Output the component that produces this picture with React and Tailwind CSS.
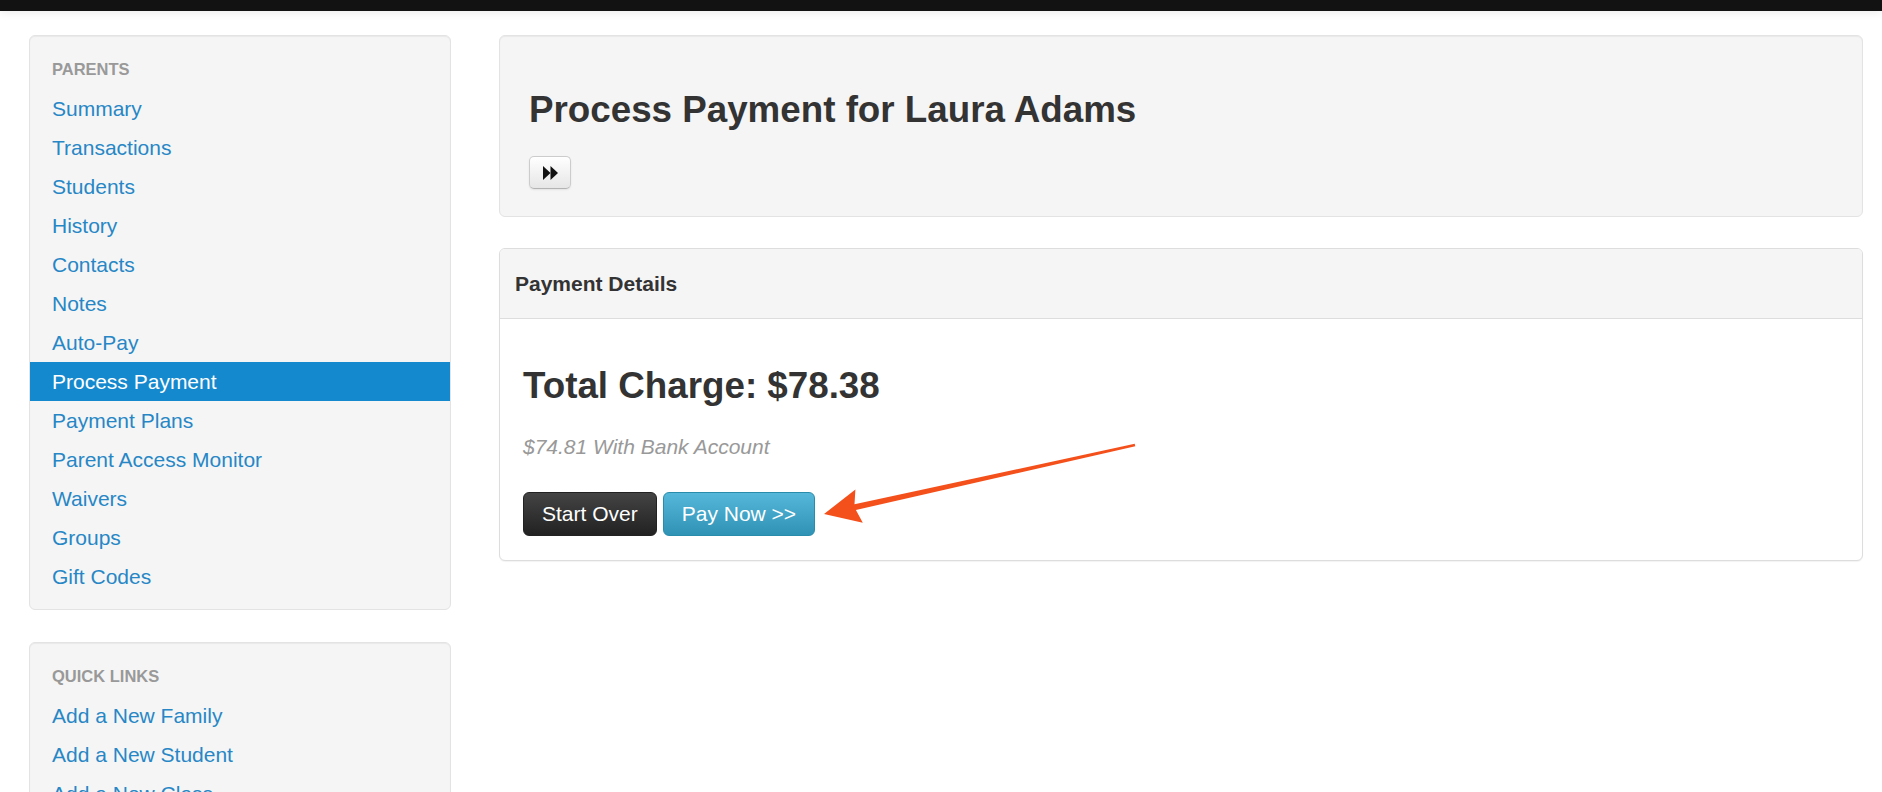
import React from "react";

const parentLinks = [
  "Summary",
  "Transactions",
  "Students",
  "History",
  "Contacts",
  "Notes",
  "Auto-Pay",
  "Process Payment",
  "Payment Plans",
  "Parent Access Monitor",
  "Waivers",
  "Groups",
  "Gift Codes",
];

const quickLinks = ["Add a New Family", "Add a New Student", "Add a New Class"];

function NavCard({ title, items, active }) {
  return (
    <div className="rounded-[6px] border border-[#e3e3e3] bg-[#f5f5f5] pt-[14px] pb-[13px] shadow-[inset_0_1px_1px_rgba(0,0,0,0.05)]">
      <ul>
        <li className="px-[22px] text-[16.5px] font-bold uppercase leading-[39px] text-[#999]">
          {title}
        </li>
        {items.map((item) => (
          <li key={item}>
            <a
              href="#"
              className={`block px-[22px] text-[21px] leading-[39px] ${
                item === active ? "bg-[#1589cd] text-white" : "text-[#2787c6]"
              }`}
            >
              {item}
            </a>
          </li>
        ))}
      </ul>
    </div>
  );
}

function ForwardIcon() {
  return (
    <svg width="15" height="14" viewBox="0 0 15 14" fill="#111">
      <polygon points="0,0 7.5,7 0,14" />
      <polygon points="7.5,0 15,7 7.5,14" />
    </svg>
  );
}

function Arrow() {
  return (
    <svg
      className="pointer-events-none absolute left-0 top-0"
      width="1882"
      height="792"
      viewBox="0 0 1882 792"
    >
      <polygon
        fill="#f4501c"
        points="824,514 855.4,489.6 854.5,504.2 1134.7,443.8 1135.3,446.2 855.9,510 862.8,522.8"
      />
    </svg>
  );
}

export default function App() {
  return (
    <div className="relative min-h-screen bg-white font-['Liberation_Sans',Arial,sans-serif] text-[#333]">
      <div className="h-[11px] bg-[#121212] shadow-[0_2px_8px_rgba(0,0,0,0.08)]" />

      <div className="flex gap-[48px] pl-[29px] pr-[19px] pt-[24px]">
        <aside className="flex w-[422px] shrink-0 flex-col gap-[32px]">
          <NavCard title="Parents" items={parentLinks} active="Process Payment" />
          <NavCard title="Quick Links" items={quickLinks} />
        </aside>

        <main className="flex min-w-0 flex-1 flex-col gap-[31px]">
          <div className="rounded-[6px] border border-[#e3e3e3] bg-[#f5f5f5] px-[29px] pt-[54px] pb-[27px] shadow-[inset_0_1px_1px_rgba(0,0,0,0.05)]">
            <h3 className="text-[36.75px] font-bold leading-[40px]">
              Process Payment for Laura Adams
            </h3>
            <button className="mt-[26px] flex h-[33px] w-[42px] items-center justify-center rounded-[5px] border border-[#ccc] border-b-[#b3b3b3] bg-gradient-to-b from-white to-[#e6e6e6] shadow-[0_1px_2px_rgba(0,0,0,0.08)]">
              <ForwardIcon />
            </button>
          </div>

          <div className="overflow-hidden rounded-[6px] border border-[#ddd] bg-white shadow-[0_1px_1px_rgba(0,0,0,0.05)]">
            <div className="flex h-[70px] items-center border-b border-[#ddd] bg-[#f5f5f5] px-[15px]">
              <span className="text-[21px] font-bold">Payment Details</span>
            </div>
            <div className="px-[23px] pt-[47px] pb-[24px]">
              <h3 className="text-[36.75px] font-bold leading-[40px]">
                Total Charge: $78.38
              </h3>
              <p className="mt-[26px] text-[21px] italic leading-[30px] text-[#999]">
                $74.81 With Bank Account
              </p>
              <div className="mt-[30px] flex gap-[6px]">
                <button className="h-[44px] rounded-[6px] border border-[#222] bg-gradient-to-b from-[#444] to-[#222] px-[18px] text-[21px] leading-[30px] text-white">
                  Start Over
                </button>
                <button className="h-[44px] rounded-[6px] border border-[#2a8cab] bg-gradient-to-b from-[#55b7d9] to-[#2f93b6] px-[18px] text-[21px] leading-[30px] text-white">
                  Pay Now &gt;&gt;
                </button>
              </div>
            </div>
          </div>
        </main>
      </div>

      <Arrow />
    </div>
  );
}
